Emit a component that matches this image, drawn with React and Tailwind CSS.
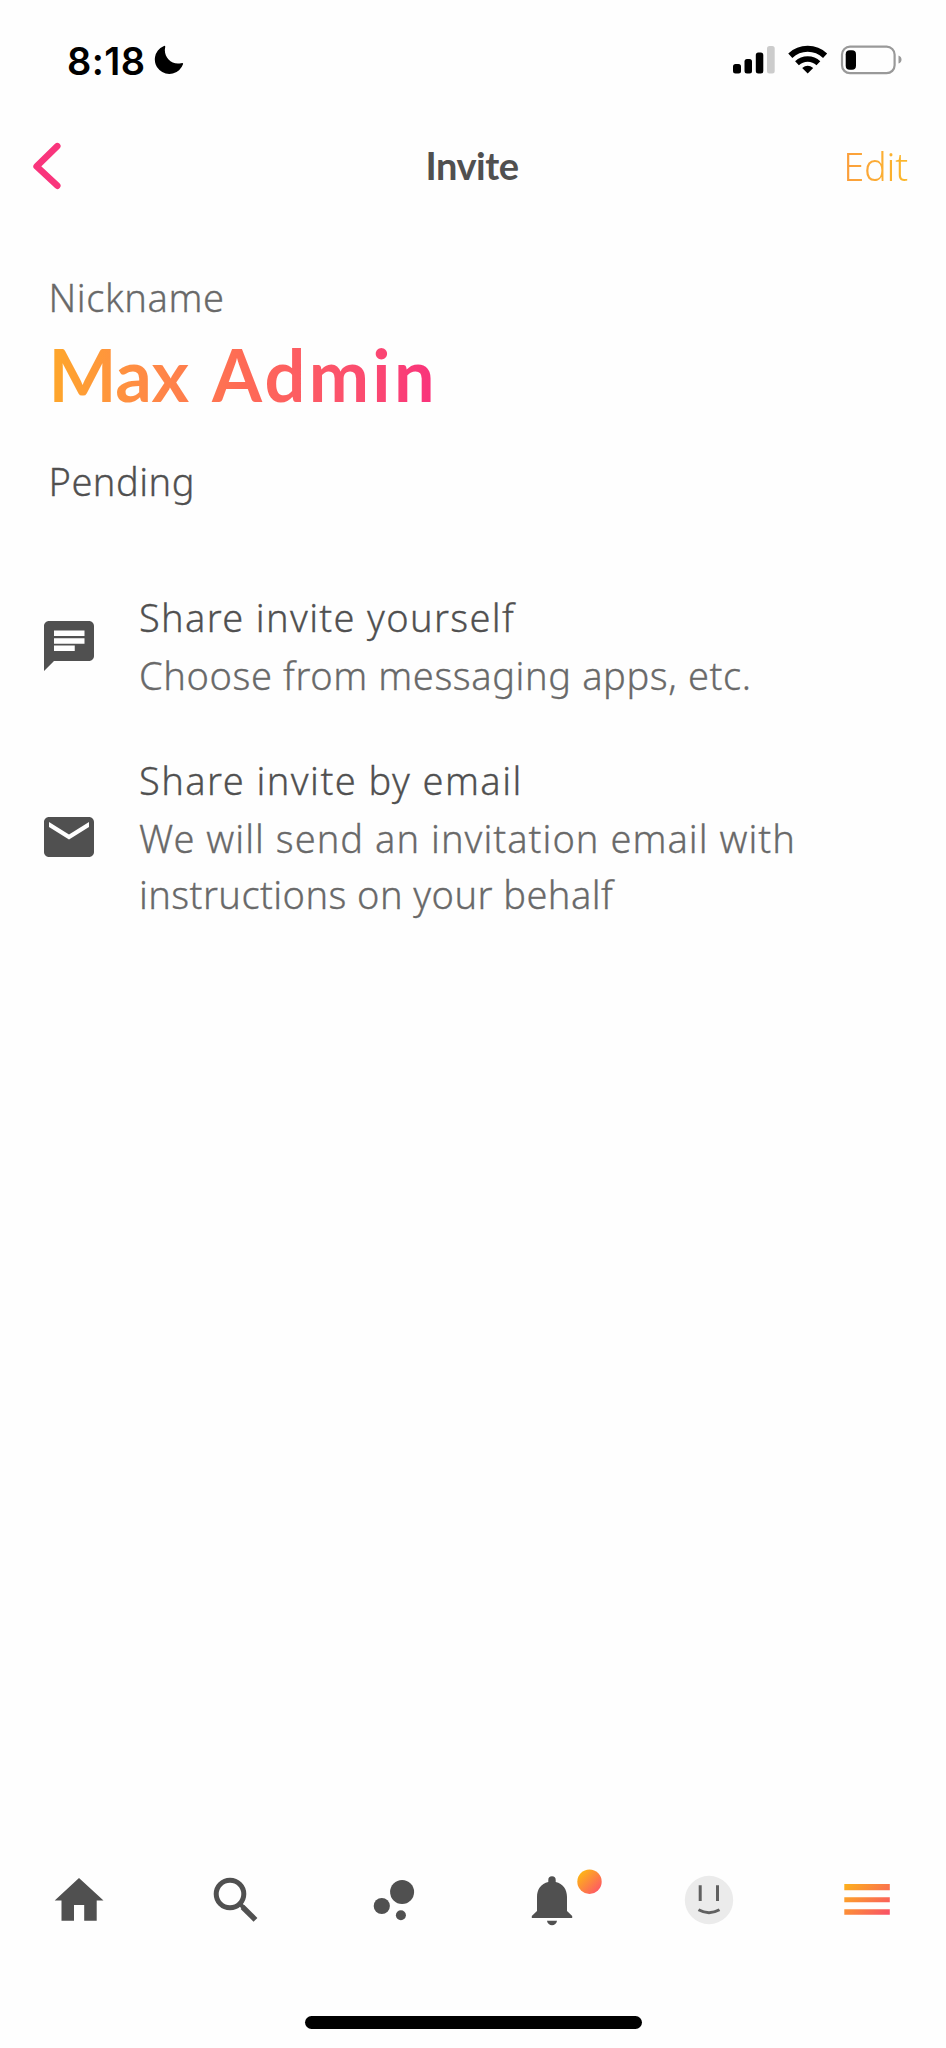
import React from 'react';

function StatusBar() {
  return (
    <div className="flex h-[122px] shrink-0 items-center justify-between pl-[67px] pr-[43px]">
      <div className="flex items-center gap-[9px]">
        <span className="pb-px font-['Inter'] text-[38px] font-semibold leading-[50px] tracking-[0.4px] text-black">8:18</span>
        <svg className="mb-0.5 h-[30px] w-[30px]" viewBox="0 0 30 30">
          <path d="M9.500 1.200Q11.500 0 11.200 2.200C9 11 17 20.500 27 18.200Q29.600 17.500 29 19.300A14.500 14.500 0 1 1 9.500 1.200Z" fill="#000" />
        </svg>
      </div>
      <svg className="h-[32px] w-[170px]" viewBox="0 0 170 32">
        <rect x="0" y="19" width="8" height="9.500" rx="2.500" />
        <rect x="11.500" y="14" width="7.500" height="14.500" rx="2.500" />
        <rect x="22.800" y="7.500" width="7.500" height="21" rx="2.500" />
        <rect x="34" y="1" width="7.700" height="27.500" rx="2.500" fill="#ccc" />
        <g fill="none" stroke="#000">
          <path d="M57.300 10.700A25.500 25.500 0 0 1 92.100 10.700" strokeWidth="6" />
          <path d="M64 18.300A15.500 15.500 0 0 1 85.400 18.300" strokeWidth="5.500" />
        </g>
        <path d="M69.200 23Q74.700 18.600 80.200 23L74.700 28.600Z" />
        <rect x="109" y="1.600" width="52.600" height="26.600" rx="8" fill="none" stroke="#999" strokeWidth="2.200" />
        <rect x="112.700" y="5.200" width="10.300" height="19.500" rx="4" />
        <path d="M165.500 10.500Q168.500 11.500 168.500 14.500T165.500 18.500Z" fill="#999" />
      </svg>
    </div>
  );
}

function Header() {
  return (
    <header className="grid h-[90px] shrink-0 grid-cols-[1fr_auto_1fr] items-center pl-[30px] pr-[38px]">
      <svg className="h-[50px] w-[32px]" viewBox="0 0 32 50">
        <path d="M27.300 4.100L6.600 24.400L27.300 43.700" fill="none" stroke="#f9357c" strokeWidth="6.500" strokeLinecap="round" strokeLinejoin="round" />
      </svg>
      <h1 className="pb-1 pl-1.5 text-center font-['Lato'] text-[38px] font-bold leading-[50px] tracking-[-0.5px] text-[#505050]">Invite</h1>
      <button className="justify-self-end bg-linear-to-r from-[#fb9d3c] to-[#fbb82a] bg-clip-text pb-[3px] font-['Noto_Sans'] text-[38px] font-light leading-[50px] tracking-[-0.2px] text-transparent">Edit</button>
    </header>
  );
}

function ShareOption({ icon, title, titleClass, children }) {
  return (
    <div className="flex items-center">
      <svg className="mr-10 h-[60px] w-[60px] shrink-0" viewBox="0 0 24 24" fill="#505050">{icon}</svg>
      <div className="whitespace-nowrap font-['Noto_Sans'] text-[38px] font-light leading-[58px] text-[#696969] [-webkit-text-stroke:0.3px]">
        <div className={'text-[#505050] ' + titleClass}>{title}</div>
        {children}
      </div>
    </div>
  );
}

function NavIcon({ label, children }) {
  return (
    <button aria-label={label} className="flex justify-center">
      <svg className="h-[60px] w-[60px] overflow-visible" viewBox="0 0 60 60" fill="#505050">{children}</svg>
    </button>
  );
}

export default function App() {
  return (
    <div className="flex h-[2048px] w-[946px] flex-col overflow-hidden bg-[#fefefe]">
      <StatusBar />
      <Header />
      <main className="flex-1 pt-[57px]">
        <section className="flex flex-col items-start pl-[48.500px] font-['Noto_Sans'] text-[38px] font-light leading-[56px]">
          <div className="tracking-[0.6px] text-[#696969] [-webkit-text-stroke:0.3px]">Nickname</div>
          <div className="mt-[9px] bg-linear-to-r from-[#fea728] via-[#fe6a55] to-[#f9307c] bg-clip-text font-['Lato'] text-[72px] font-bold leading-[80px] text-transparent">
            <span className="tracking-[-0.3px]">Max </span>
            <span className="ml-[6px] tracking-[3.3px]">Admin</span>
          </div>
          <div className="mt-[39px] tracking-[0.5px] text-[#505050] [-webkit-text-stroke:0.3px]">Pending</div>
        </section>
        <section className="mt-[79px] flex flex-col gap-[47px] pl-[39px]">
          <ShareOption
            title="Share invite yourself"
            titleClass="tracking-[1.33px]"
            icon={<path fillRule="evenodd" d="M20 2H4c-1.100 0-2 .9-2 2v18l4-4h14c1.100 0 2-.9 2-2V4c0-1.100-.9-2-2-2zM6 5.800h12.200v2.200H6zM6 8.900h12.200v2.200H6zM6 11.800h8.300v2.200H6z" />}
          >
            <div className="tracking-[0.6px]">Choose from messaging apps, etc.</div>
          </ShareOption>
          <ShareOption
            title="Share invite by email"
            titleClass="tracking-[1.44px]"
            icon={<path d="M20 4H4c-1.100 0-2 .9-2 2v12c0 1.100.9 2 2 2h16c1.100 0 2-.9 2-2V6c0-1.100-.9-2-2-2zm0 4l-8 5-8-5V6l8 5 8-5z" />}
          >
            <div className="tracking-[1.02px]">We will send an invitation email with</div>
            <div className="leading-[55px] tracking-[0.43px]">instructions on your behalf</div>
          </ShareOption>
        </section>
      </main>
      <nav className="grid h-[60px] shrink-0 grid-cols-6">
        <NavIcon label="Home">
          <path d="M30 8L5.700 30.500H12.500V50.700H25V35H35.200V50.700H47.700V30.500H54.500Z" />
        </NavIcon>
        <NavIcon label="Search">
          <circle cx="24" cy="24" r="13.800" fill="none" stroke="#505050" strokeWidth="5" />
          <path d="M33.500 33.500L38 38" stroke="#505050" strokeWidth="4" />
          <path d="M36.500 37L49.500 49.800" stroke="#505050" strokeWidth="5.400" />
        </NavIcon>
        <NavIcon label="Groups">
          <circle cx="38.100" cy="22" r="12" />
          <circle cx="17.800" cy="36" r="8.100" />
          <circle cx="36.900" cy="45.300" r="5" />
        </NavIcon>
        <NavIcon label="Notifications">
          <path d="M26.300 12V10a3.700 3.700 0 0 1 7.400 0V12C41 13.500 45 19.500 45 27V41L50.200 46V48H9.800V46L15 41V27C15 19.500 19 13.500 26.300 12Z" />
          <path d="M25 50.700H35C34.500 53.600 32.500 55.200 30 55.200S25.500 53.600 25 50.700Z" />
          <defs>
            <linearGradient id="dot" x1="0" y1="0" x2="1" y2="1">
              <stop offset="0.100" stopColor="#fdb913" />
              <stop offset="0.900" stopColor="#fe5667" />
            </linearGradient>
          </defs>
          <circle cx="67.500" cy="11.700" r="12.200" fill="url(#dot)" />
        </NavIcon>
        <NavIcon label="Profile">
          <circle cx="30" cy="30" r="24.200" fill="#ebebeb" />
          <path d="M21.200 15.300V31M38.500 15.300V31M19.500 39.800Q30 45.500 40.500 39.800" fill="none" stroke="#606060" strokeWidth="3" />
        </NavIcon>
        <NavIcon label="Menu">
          <defs>
            <linearGradient id="menu" gradientUnits="userSpaceOnUse" x1="10" y1="10" x2="50" y2="48">
              <stop offset="0" stopColor="#fdb31a" />
              <stop offset="1" stopColor="#f94f68" />
            </linearGradient>
          </defs>
          <path d="M7.300 14H52.800V20.300H7.300ZM7.300 27.300H52.800V32.300H7.300ZM7.300 39.300H52.800V44.700H7.300Z" fill="url(#menu)" />
        </NavIcon>
      </nav>
      <div className="mx-auto mb-[19.500px] mt-[86px] h-[12.500px] w-[337px] shrink-0 rounded-full bg-black" />
    </div>
  );
}
